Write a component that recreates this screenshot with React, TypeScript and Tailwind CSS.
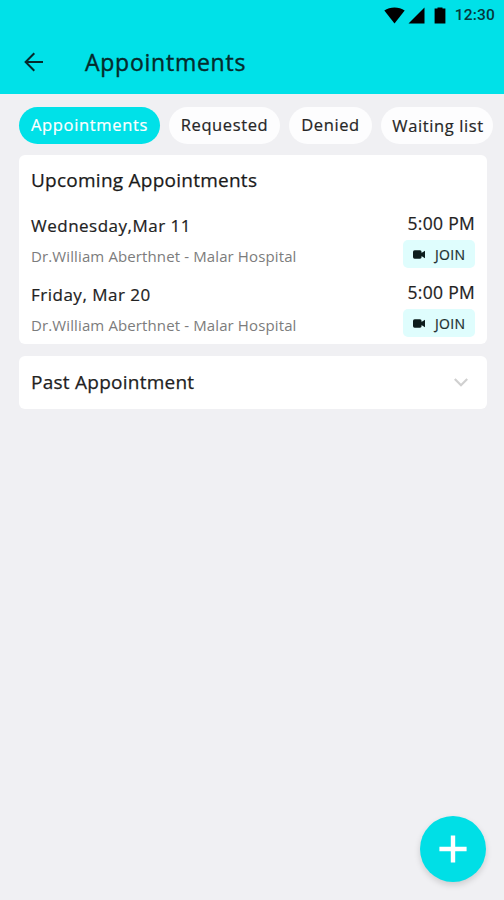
import React from 'react';
import clsx from 'clsx';

interface Appointment {
  date: string;
  doctor: string;
  time: string;
}

const appointments: Appointment[] = [
  { date: 'Wednesday,Mar 11', doctor: 'Dr.William Aberthnet - Malar Hospital', time: '5:00 PM' },
  { date: 'Friday, Mar 20', doctor: 'Dr.William Aberthnet - Malar Hospital', time: '5:00 PM' },
];

const tabs = [
  { label: 'Appointments', style: 'w-[141px] tracking-[0.65px]' },
  { label: 'Requested', style: 'w-[111px] tracking-[0.6px]' },
  { label: 'Denied', style: 'w-[83px] tracking-[0.6px]' },
  { label: 'Waiting list', style: 'w-[112px] pt-0.5 pl-0.5 tracking-[0.6px]' },
];

const StatusBar: React.FC = () => (
  <div className="flex h-[30px] items-center justify-end pr-[9px]">
    {/* Wifi */}
    <svg className="mr-[3px] h-[17px] w-[21px]" viewBox="0 0 21 17">
      <path d="M0.3 3.6C6-0.6 15-0.6 20.7 3.6L10.5 16.6Z" fill="#000" />
    </svg>
    {/* Signal */}
    <svg className="mr-[9px] h-[17px] w-[17px]" viewBox="0 0 17 17">
      <path d="M16.5 0.5V16.4H0.5Z" fill="#000" />
    </svg>
    {/* Battery */}
    <svg className="mr-[9px] h-[17px] w-[12px]" viewBox="0 0 12 17">
      <path d="M3.5 0.4h5v1.2H11.4v14.8H0.6V1.6H3.5Z" fill="#000" />
    </svg>
    <span className="pt-px font-['Roboto',sans-serif] text-[15.5px] font-medium tracking-[0.2px] text-[#05393c]">
      12:30
    </span>
  </div>
);

const Header: React.FC = () => (
  <header className="h-[94px] bg-[#00e1e8]">
    <StatusBar />
    <div className="flex h-16 items-center pl-6">
      <button aria-label="Back">
        <svg className="h-5 w-5" viewBox="0 0 20 20" fill="none" stroke="#05292b" strokeWidth="2">
          <path d="M19 10H2M10.3 1.3L1.6 10l8.7 8.7" />
        </svg>
      </button>
      <h1 className="ml-[41px] text-[23px] tracking-[0.75px] text-[#052a2c] [-webkit-text-stroke:0.4px]">
        Appointments
      </h1>
    </div>
  </header>
);

const JoinButton: React.FC = () => (
  <button className="flex h-[28px] w-[72px] items-center rounded-[5px] bg-[#dffdfd] pl-2.5">
    <svg className="h-[9px] w-3" viewBox="0 0 12 9" fill="#0d1c1c">
      <rect x="0" y="0.3" width="8.6" height="8.4" rx="1.6" />
      <path d="M7.6 3.6L12 0.8V8.2L7.6 5.4Z" />
    </svg>
    <span className="ml-2.5 text-[14px] tracking-[0.3px] text-[#1c2f2f] [-webkit-text-stroke:0.2px]">JOIN</span>
  </button>
);

const AppointmentRow: React.FC<{ item: Appointment }> = ({ item }) => (
  <div className="flex h-[69px] justify-between">
    <div className="pt-[3px]">
      <p className="text-[17px] leading-6 tracking-[0.5px] text-[#222] [-webkit-text-stroke:0.2px]">{item.date}</p>
      <p className="mt-1.5 text-[15px] leading-6 tracking-[0.12px] text-[#7c7c7c]">{item.doctor}</p>
    </div>
    <div className="flex flex-col items-end">
      <p className="text-[17.5px] leading-6 tracking-[0.3px] text-[#222] [-webkit-text-stroke:0.2px]">
        {item.time}
      </p>
      <div className="mt-[5px]">
        <JoinButton />
      </div>
    </div>
  </div>
);

const App: React.FC = () => {
  return (
    <div className="relative h-[900px] w-[504px] overflow-hidden bg-[#f0f0f3] font-['Open_Sans','Noto_Sans',sans-serif]">
      <Header />

      <nav className="mt-[13px] ml-[19px] flex gap-[9px]">
        {tabs.map((tab, index) => (
          <button
            key={tab.label}
            className={clsx(
              'flex h-[37px] shrink-0 items-center justify-center rounded-full text-[16.5px] whitespace-nowrap [-webkit-text-stroke:0.2px]',
              index === 0 ? 'bg-[#00e1e8] text-white' : 'bg-[#fdfdfe] text-[#262626]',
              tab.style
            )}
          >
            {tab.label}
          </button>
        ))}
      </nav>

      <main className="mt-[11px] mr-[17px] ml-[19px] flex flex-col gap-3">
        <section className="h-[189px] rounded-md bg-white px-3 pt-3">
          <h2 className="mb-[18px] text-[19px] leading-[26px] tracking-[0.25px] text-[#1a1a1a] [-webkit-text-stroke:0.25px]">
            Upcoming Appointments
          </h2>
          {appointments.map((item) => (
            <AppointmentRow key={item.date} item={item} />
          ))}
        </section>

        <section className="flex h-[53px] items-center justify-between rounded-md bg-white pr-[19px] pl-3">
          <h2 className="text-[19px] tracking-[0.25px] text-[#222] [-webkit-text-stroke:0.25px]">Past Appointment</h2>
          <svg className="h-[9px] w-[14px]" viewBox="0 0 14 9" fill="none" stroke="#d0d0d0" strokeWidth="2.2">
            <path d="M0.8 1L7 7.2L13.2 1" />
          </svg>
        </section>
      </main>

      {/* Floating add button */}
      <button
        aria-label="Add appointment"
        className="absolute right-[18px] bottom-[18px] flex h-[66px] w-[66px] items-center justify-center rounded-full bg-[#00dfe6] shadow-[0_3px_6px_rgba(0,0,0,0.15)]"
      >
        <svg className="h-7 w-7" viewBox="0 0 28 28" fill="none" stroke="#fff" strokeWidth="4.4">
          <path d="M14 0.4V27.6M0.4 14H27.6" />
        </svg>
      </button>
    </div>
  );
};

export default App;
